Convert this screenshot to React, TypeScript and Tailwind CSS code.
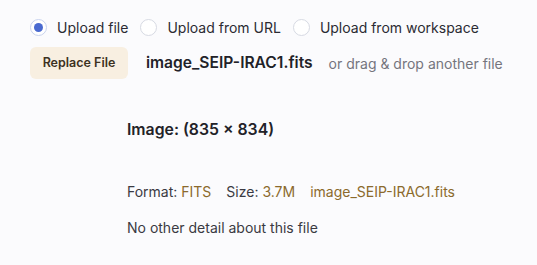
import React from "react";

const Radio = ({ checked, label }: { checked?: boolean; label: string }) => (
  <label className="flex items-center gap-[10px]">
    <span
      className={
        "flex h-[17px] w-[17px] items-center justify-center rounded-full border bg-white " +
        (checked ? "border-[#c9d3ee]" : "border-[#d7dae3]")
      }
    >
      {checked && <span className="h-[9px] w-[9px] rounded-full bg-[#4a6ad0]" />}
    </span>
    <span className="text-[14px] text-[#2b2b33]">{label}</span>
  </label>
);

export default function App() {
  return (
    <div
      className="h-[265px] w-[537px] bg-[#fbfbfd] pl-[30px] pt-[17px]"
      style={{ fontFamily: "Inter, 'Noto Sans', sans-serif" }}
    >
      <div className="flex h-[20px] items-center gap-[12px]">
        <Radio checked label="Upload file" />
        <Radio label="Upload from URL" />
        <Radio label="Upload from workspace" />
      </div>
      <div className="mt-[10px] flex items-center">
        <button className="h-[32px] w-[98px] rounded-[6px] bg-[#f8efe1] text-[12.5px] font-semibold text-[#3d3222]">
          Replace File
        </button>
        <span className="ml-[18px] text-[15.6px] font-semibold text-[#222228]">
          image_SEIP-IRAC1.fits
        </span>
        <span className="ml-[16px] text-[14px] text-[#75757d]">
          or drag &amp; drop another file
        </span>
      </div>
      <div className="pl-[97px]">
        <div className="mt-[39px] text-[15.8px] leading-[24px] font-semibold text-[#222228]">
          Image: (835 × 834)
        </div>
        <div className="mt-[40px] flex gap-[15px] text-[14px] leading-[20px] text-[#3a3a42]">
          <span>
            Format: <span className="text-[#8b6a2c]">FITS</span>
          </span>
          <span>
            Size: <span className="text-[#8b6a2c]">3.7M</span>
          </span>
          <span className="text-[#8b6a2c]">image_SEIP-IRAC1.fits</span>
        </div>
        <div className="mt-[16px] text-[14px] leading-[20px] text-[#3a3a42]">
          No other detail about this file
        </div>
      </div>
    </div>
  );
}
